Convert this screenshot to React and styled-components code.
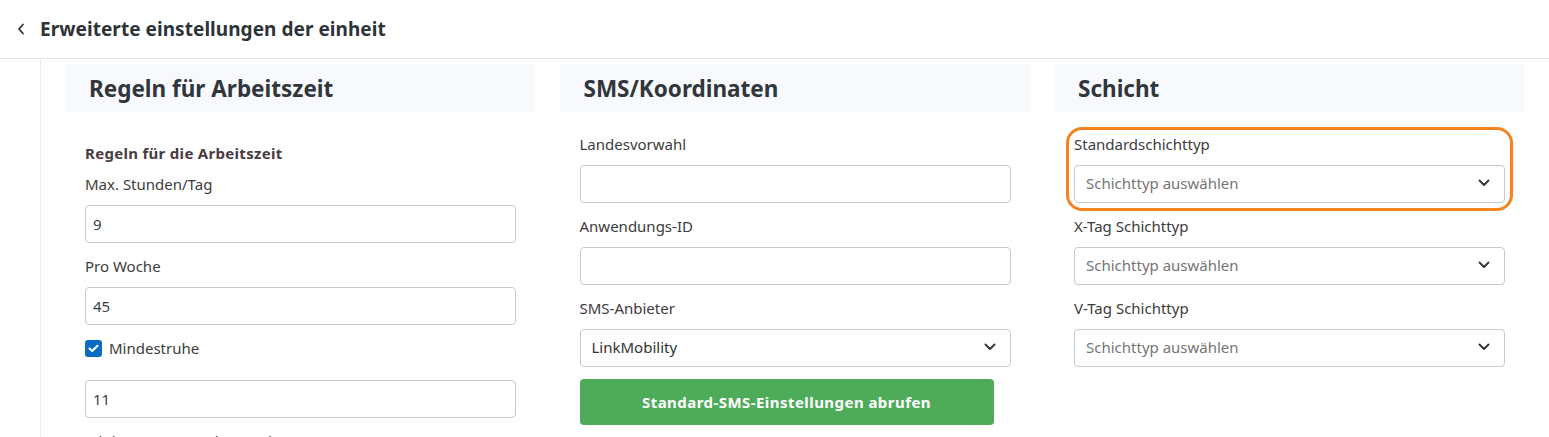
import styled, { createGlobalStyle } from "styled-components";

const GlobalStyle = createGlobalStyle`
  html, body {
    margin: 0;
    padding: 0;
    background: #fff;
    font-family: "Noto Sans", "Open Sans", sans-serif;
    color: #3a3a3a;
    overflow: hidden;
  }
  * { box-sizing: border-box; }
`;

const TopBar = styled.header`
  height: 59px;
  display: flex;
  align-items: center;
  gap: 12px;
  padding-left: 14px;
  border-bottom: 1px solid #e2e2e2;
`;

const BackButton = styled.button`
  border: 0;
  background: none;
  padding: 0;
  width: 14px;
  height: 14px;
  display: flex;
  align-items: center;
  justify-content: center;
  color: #333;
  cursor: pointer;
`;

const Title = styled.h1`
  margin: 0;
  font-size: 19px;
  font-weight: 700;
  color: #2e3338;
  letter-spacing: 0.05px;
`;

const Body = styled.div`
  display: flex;
  height: 378px;
`;

const Rail = styled.aside`
  width: 41px;
  flex: none;
  border-right: 1px solid #ececec;
`;

const Columns = styled.main`
  flex: 1;
  display: grid;
  grid-template-columns: repeat(3, 470px);
  column-gap: 24.5px;
  padding: 5px 0 0 24px;
  align-items: start;
`;

const Panel = styled.section`
  display: flex;
  flex-direction: column;
`;

const PanelHead = styled.div`
  height: 48px;
  background: #f7f9fc;
  display: flex;
  align-items: center;
  padding-left: ${(p) => p.$indent}px;
`;

const PanelTitle = styled.h2`
  margin: 0;
  font-size: 22.5px;
  font-weight: 700;
  color: #30363b;
`;

const PanelBody = styled.div`
  position: relative;
  padding: ${(p) => p.$top}px 19px 0 20px;
  display: flex;
  flex-direction: column;
`;

const SubTitle = styled.div`
  font-size: 15px;
  font-weight: 700;
  line-height: 24px;
  letter-spacing: 0.3px;
  color: #4a3b43;
  margin-bottom: 7px;
`;

const Field = styled.div`
  display: flex;
  flex-direction: column;
  margin-bottom: ${(p) => p.$after ?? 11}px;
`;

const Label = styled.label`
  font-size: 15px;
  line-height: 24px;
  color: #3c3c3c;
  margin-bottom: 9px;
`;

const TextInput = styled.input`
  height: 38px;
  width: 100%;
  border: 1px solid #c9c9c9;
  border-radius: 4px;
  padding: 0 7px;
  font-family: inherit;
  font-size: 15px;
  color: #3a3f44;
  background: #fff;
  outline: none;
`;

const SelectBox = styled.div`
  height: 38px;
  border: 1px solid #c9c9c9;
  border-radius: 4px;
  padding: 0 14px 2px 11px;
  display: flex;
  align-items: center;
  justify-content: space-between;
  font-size: 15px;
  color: ${(p) => (p.$placeholder ? "#757575" : "#333")};
  background: #fff;
`;

const CheckRow = styled.label`
  display: flex;
  align-items: center;
  gap: 7px;
  height: 24px;
  font-size: 15px;
  color: #3c3c3c;
  margin-bottom: 20px;
`;

const CheckBox = styled.span`
  width: 17px;
  height: 17px;
  border-radius: 3px;
  background: #0c6cc4;
  display: flex;
  align-items: center;
  justify-content: center;
`;

const GreenButton = styled.button`
  margin-top: 1px;
  width: 414px;
  height: 46px;
  border: 0;
  border-radius: 4px;
  background: #4eab59;
  color: #fff;
  font-family: inherit;
  font-size: 15px;
  font-weight: 700;
  letter-spacing: 0.45px;
  cursor: pointer;
`;

const Highlight = styled.div`
  position: absolute;
  left: 12px;
  top: 15px;
  width: 447px;
  height: 84px;
  border: 3px solid #f7831f;
  border-radius: 16px;
  pointer-events: none;
`;

const Chevron = () => (
  <svg width="12" height="8" viewBox="0 0 12 8" fill="none">
    <path d="M1.5 1.5 6 6l4.5-4.5" stroke="#343a40" strokeWidth="2" strokeLinecap="round" strokeLinejoin="round" />
  </svg>
);

const Select = ({ value, placeholder }) => (
  <SelectBox $placeholder={!value}>
    <span>{value || placeholder}</span>
    <Chevron />
  </SelectBox>
);

export default function App() {
  return (
    <>
      <GlobalStyle />
      <TopBar>
        <BackButton aria-label="Zurück">
          <svg width="8" height="12" viewBox="0 0 8 12" fill="none">
            <path d="M6 1.5 2 6l4 4.5" stroke="#333" strokeWidth="1.8" strokeLinecap="round" strokeLinejoin="round" />
          </svg>
        </BackButton>
        <Title>Erweiterte einstellungen der einheit</Title>
      </TopBar>
      <Body>
        <Rail />
        <Columns>
          <Panel>
            <PanelHead $indent={24}>
              <PanelTitle>Regeln für Arbeitszeit</PanelTitle>
            </PanelHead>
            <PanelBody $top={29}>
              <SubTitle>Regeln für die Arbeitszeit</SubTitle>
              <Field>
                <Label>Max. Stunden/Tag</Label>
                <TextInput defaultValue="9" />
              </Field>
              <Field>
                <Label>Pro Woche</Label>
                <TextInput defaultValue="45" />
              </Field>
              <CheckRow>
                <CheckBox>
                  <svg width="11" height="9" viewBox="0 0 11 9" fill="none">
                    <path d="M1.5 4.5 4.2 7 9.5 1.8" stroke="#fff" strokeWidth="2" strokeLinecap="round" strokeLinejoin="round" />
                  </svg>
                </CheckBox>
                Mindestruhe
              </CheckRow>
              <Field>
                <TextInput defaultValue="11" />
              </Field>
              <Field>
                <Label>Minimum pro Woche/Woche</Label>
              </Field>
            </PanelBody>
          </Panel>

          <Panel>
            <PanelHead $indent={24}>
              <PanelTitle>SMS/Koordinaten</PanelTitle>
            </PanelHead>
            <PanelBody $top={20}>
              <Field>
                <Label>Landesvorwahl</Label>
                <TextInput />
              </Field>
              <Field>
                <Label>Anwendungs-ID</Label>
                <TextInput />
              </Field>
              <Field>
                <Label>SMS-Anbieter</Label>
                <Select value="LinkMobility" />
              </Field>
              <GreenButton>Standard-SMS-Einstellungen abrufen</GreenButton>
            </PanelBody>
          </Panel>

          <Panel>
            <PanelHead $indent={24}>
              <PanelTitle>Schicht</PanelTitle>
            </PanelHead>
            <PanelBody $top={20}>
              <Field>
                <Label>Standardschichttyp</Label>
                <Select placeholder="Schichttyp auswählen" />
              </Field>
              <Field>
                <Label>X-Tag Schichttyp</Label>
                <Select placeholder="Schichttyp auswählen" />
              </Field>
              <Field>
                <Label>V-Tag Schichttyp</Label>
                <Select placeholder="Schichttyp auswählen" />
              </Field>
              <Highlight />
            </PanelBody>
          </Panel>
        </Columns>
      </Body>
    </>
  );
}
